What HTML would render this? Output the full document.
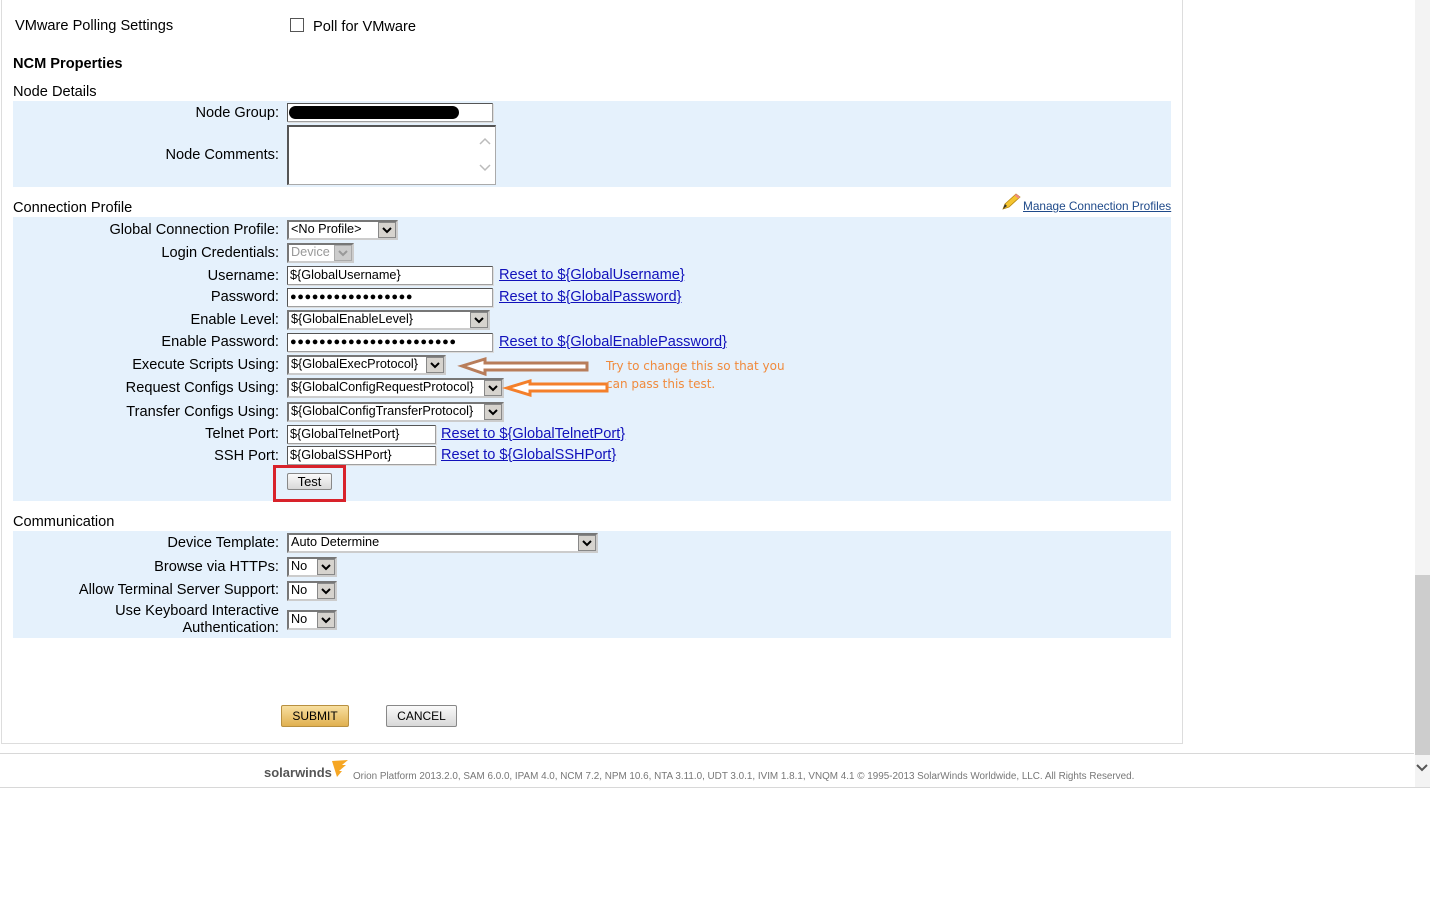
<!DOCTYPE html>
<html><head><meta charset="utf-8"><style>
*{box-sizing:border-box;margin:0;padding:0}
body{width:1440px;height:900px;background:#fff;position:relative;overflow:hidden;font-family:"Liberation Sans",Arial,sans-serif;color:#000}
.a{position:absolute}
.t{position:absolute;font-size:14.6px;white-space:nowrap;margin-top:1px}
.l{position:absolute;font-size:14.6px;white-space:nowrap;right:1161px;text-align:right;margin-top:1px}
.band{position:absolute;left:13px;width:1158px;background:#e5f1fc}
.inp{position:absolute;background:#fff;border:1px solid #a0a0a0;border-top-color:#555;border-left-color:#555;font-size:12.7px;padding-left:2px;line-height:16px;height:19px;white-space:nowrap;overflow:hidden;box-shadow:1px 1px 0 #ddd}
.sel{position:absolute;background:#fff;border:2px solid #777;border-right-color:#ccc;border-bottom-color:#ccc;font-size:12.7px;padding-left:2px;line-height:15px;height:20px;white-space:nowrap}
.sel .b{position:absolute;right:0;top:0;width:18px;height:16px;background:#d6d3ce;border:1px solid #888}
.sel .b svg{position:absolute;left:3px;top:3px}
.lk{position:absolute;font-size:14.6px;color:#1111bb;text-decoration:underline;white-space:nowrap;margin-top:1px}
.btn{position:absolute;font-size:12px;text-align:center;border:1px solid #888;border-radius:2px}
</style></head><body>
<div class="a" style="left:1px;top:0;width:1182px;height:744px;border-left:1px solid #ddd;border-right:1px solid #ddd;border-bottom:1px solid #ddd"></div>

<div class="t" style="left:15px;top:17px">VMware Polling Settings</div>
<div class="a" style="left:290px;top:18px;width:14px;height:14px;border:1px solid #555;background:#fff"></div>
<div class="t" style="left:313px;top:18px">Poll for VMware</div>
<div class="t" style="left:13px;top:55px;font-weight:bold">NCM Properties</div>
<div class="t" style="left:13px;top:83px">Node Details</div>

<div class="band" style="top:101px;height:86px"></div>
<div class="l" style="top:104px">Node Group:</div>
<div class="inp" style="left:287px;top:103px;width:206px"></div>
<div class="a" style="left:289px;top:106px;width:170px;height:13px;background:#000;border-radius:7px"></div>
<div class="l" style="top:146px">Node Comments:</div>
<div class="a" style="left:287px;top:125px;width:209px;height:60px;background:#fff;border:1px solid #aaa;border-top:2px solid #555;border-left:2px solid #555"></div>
<svg class="a" style="left:479px;top:137px" width="12" height="40"><path d="M1 7 L6 2 L11 7" stroke="#bbb" fill="none" stroke-width="1.5"/><path d="M1 28 L6 33 L11 28" stroke="#bbb" fill="none" stroke-width="1.5"/></svg>

<div class="t" style="left:13px;top:199px">Connection Profile</div>
<svg class="a" style="left:1001px;top:193px" width="20" height="18"><path d="M2 16 L4 11 L15 1 L19 4 L8 14 Z" fill="#f4c430" stroke="#b8860b" stroke-width="0.8"/><path d="M15 1 L19 4 L17.5 5.5 L13.5 2.5Z" fill="#e88"/><path d="M2 16 L4 11 L6 13Z" fill="#333"/></svg>
<div class="a" style="left:1023px;top:199px;font-size:11.8px;color:#1f4a8a;text-decoration:underline;white-space:nowrap">Manage Connection Profiles</div>

<div class="band" style="top:217px;height:284px"></div>
<div class="l" style="top:221px">Global Connection Profile:</div>
<div class="sel" style="left:287px;top:220px;width:111px">&lt;No Profile&gt;<span class="b"><svg width="10" height="8"><path d="M1 2 L5 6 L9 2" stroke="#000" stroke-width="2" fill="none"/></svg></span></div>
<div class="l" style="top:244px">Login Credentials:</div>
<div class="sel" style="left:287px;top:243px;width:67px;color:#999">Device<span class="b" style="background:#ccc;border-color:#aaa"><svg width="10" height="8"><path d="M1 2 L5 6 L9 2" stroke="#999" stroke-width="2" fill="none"/></svg></span></div>
<div class="l" style="top:267px">Username:</div>
<div class="inp" style="left:287px;top:266px;width:206px">${GlobalUsername}</div>
<div class="lk" style="left:499px;top:266px">Reset to ${GlobalUsername}</div>
<div class="l" style="top:288px">Password:</div>
<div class="inp" style="left:287px;top:288px;width:206px;font-size:11px;letter-spacing:0.6px">●●●●●●●●●●●●●●●●●</div>
<div class="lk" style="left:499px;top:288px">Reset to ${GlobalPassword}</div>
<div class="l" style="top:311px">Enable Level:</div>
<div class="sel" style="left:287px;top:310px;width:203px">${GlobalEnableLevel}<span class="b"><svg width="10" height="8"><path d="M1 2 L5 6 L9 2" stroke="#000" stroke-width="2" fill="none"/></svg></span></div>
<div class="l" style="top:333px">Enable Password:</div>
<div class="inp" style="left:287px;top:333px;width:206px;font-size:11px;letter-spacing:0.6px">●●●●●●●●●●●●●●●●●●●●●●●</div>
<div class="lk" style="left:499px;top:333px">Reset to ${GlobalEnablePassword}</div>
<div class="l" style="top:356px">Execute Scripts Using:</div>
<div class="sel" style="left:287px;top:355px;width:159px">${GlobalExecProtocol}<span class="b"><svg width="10" height="8"><path d="M1 2 L5 6 L9 2" stroke="#000" stroke-width="2" fill="none"/></svg></span></div>
<div class="l" style="top:379px">Request Configs Using:</div>
<div class="sel" style="left:287px;top:378px;width:217px">${GlobalConfigRequestProtocol}<span class="b"><svg width="10" height="8"><path d="M1 2 L5 6 L9 2" stroke="#000" stroke-width="2" fill="none"/></svg></span></div>
<div class="l" style="top:403px">Transfer Configs Using:</div>
<div class="sel" style="left:287px;top:402px;width:217px">${GlobalConfigTransferProtocol}<span class="b"><svg width="10" height="8"><path d="M1 2 L5 6 L9 2" stroke="#000" stroke-width="2" fill="none"/></svg></span></div>
<div class="l" style="top:425px">Telnet Port:</div>
<div class="inp" style="left:287px;top:425px;width:149px">${GlobalTelnetPort}</div>
<div class="lk" style="left:441px;top:425px">Reset to ${GlobalTelnetPort}</div>
<div class="l" style="top:447px">SSH Port:</div>
<div class="inp" style="left:287px;top:446px;width:149px">${GlobalSSHPort}</div>
<div class="lk" style="left:441px;top:446px">Reset to ${GlobalSSHPort}</div>
<div class="a" style="left:273px;top:465px;width:73px;height:37px;border:3px solid #d8222a"></div>
<div class="btn" style="left:287px;top:473px;width:45px;height:17px;line-height:15px;background:linear-gradient(#fafafa,#d8d8d8);font-size:13px">Test</div>

<svg class="a" style="left:455px;top:355px" width="160" height="42">
<path d="M7 11 L30 4 L30 8 L132 8 L132 15 L30 15 L30 19 Z" fill="#fff" stroke="#b87d5a" stroke-width="3"/>
<path d="M52 33 L75 26 L75 29 L152 29 L152 36 L75 36 L75 40 Z" fill="#fff" stroke="#f47f2a" stroke-width="3"/>
</svg>
<div class="a" style="left:606px;top:359px;font-size:12px;color:#f08a3c;font-family:'DejaVu Sans',sans-serif;white-space:nowrap">Try to change this so that you</div>
<div class="a" style="left:606px;top:377px;font-size:12px;color:#f08a3c;font-family:'DejaVu Sans',sans-serif;white-space:nowrap">can pass this test.</div>

<div class="t" style="left:13px;top:513px">Communication</div>
<div class="band" style="top:531px;height:107px"></div>
<div class="l" style="top:534px">Device Template:</div>
<div class="sel" style="left:287px;top:533px;width:311px">Auto Determine<span class="b"><svg width="10" height="8"><path d="M1 2 L5 6 L9 2" stroke="#000" stroke-width="2" fill="none"/></svg></span></div>
<div class="l" style="top:558px">Browse via HTTPs:</div>
<div class="sel" style="left:287px;top:557px;width:50px">No<span class="b"><svg width="10" height="8"><path d="M1 2 L5 6 L9 2" stroke="#000" stroke-width="2" fill="none"/></svg></span></div>
<div class="l" style="top:581px">Allow Terminal Server Support:</div>
<div class="sel" style="left:287px;top:581px;width:50px">No<span class="b"><svg width="10" height="8"><path d="M1 2 L5 6 L9 2" stroke="#000" stroke-width="2" fill="none"/></svg></span></div>
<div class="l" style="top:602px;line-height:17px">Use Keyboard Interactive<br>Authentication:</div>
<div class="sel" style="left:287px;top:610px;width:50px">No<span class="b"><svg width="10" height="8"><path d="M1 2 L5 6 L9 2" stroke="#000" stroke-width="2" fill="none"/></svg></span></div>

<div class="btn" style="left:281px;top:705px;width:68px;height:22px;line-height:20px;background:linear-gradient(#f8dfa0,#e0b050);border-color:#b89040">SUBMIT</div>
<div class="btn" style="left:386px;top:705px;width:71px;height:22px;line-height:20px;background:linear-gradient(#fafafa,#d8d8d8)">CANCEL</div>

<div class="a" style="left:0;top:753px;width:1414px;height:1px;background:#d8d8d8"></div>
<div class="a" style="left:0;top:787px;width:1430px;height:1px;background:#d8d8d8"></div>
<div class="a" style="left:264px;top:765px;font-size:13px;font-weight:bold;color:#555;white-space:nowrap">solarwinds</div>
<svg class="a" style="left:330px;top:759px" width="20" height="20"><path d="M2 2 L18 1 L12 6 L16 6 L9 12 L12 12 L7 18 Z" fill="#f6a623"/></svg>
<div class="a" style="left:353px;top:771px;font-size:9.9px;color:#777;white-space:nowrap">Orion Platform 2013.2.0, SAM 6.0.0, IPAM 4.0, NCM 7.2, NPM 10.6, NTA 3.11.0, UDT 3.0.1, IVIM 1.8.1, VNQM 4.1 © 1995-2013 SolarWinds Worldwide, LLC. All Rights Reserved.</div>

<div class="a" style="left:1415px;top:0;width:15px;height:787px;background:#f3f3f3"></div>
<div class="a" style="left:1415px;top:575px;width:15px;height:180px;background:#cdcdcd"></div>
<svg class="a" style="left:1416px;top:763px" width="12" height="10"><path d="M1 2 L6 7 L11 2" stroke="#555" stroke-width="2" fill="none"/></svg>
</body></html>
